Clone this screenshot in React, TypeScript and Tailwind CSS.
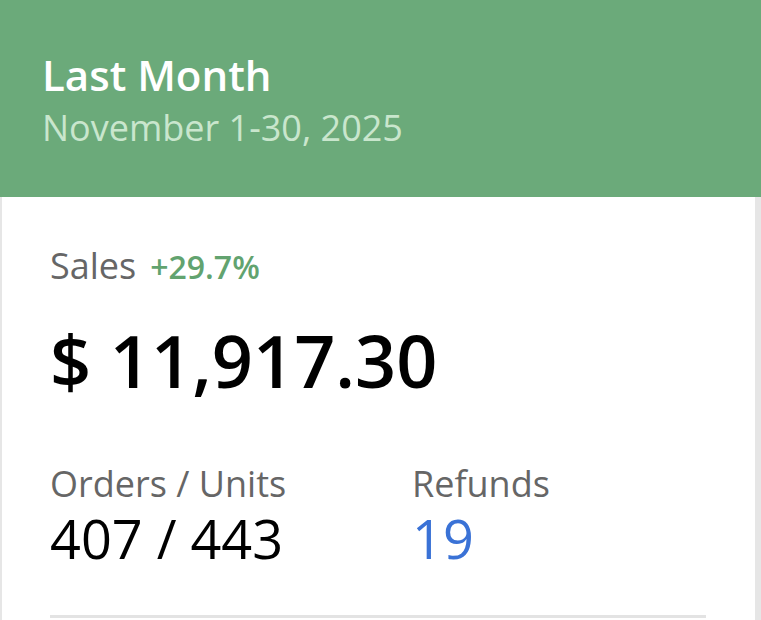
import React from 'react';

const App: React.FC = () => {
  return (
    <div className="w-[761px] h-[620px] overflow-hidden bg-[#e6e6e6] font-['Open_Sans',sans-serif]">
      <div className="h-[197px] bg-[#6baa7a] px-[42px] pt-[47px]">
        <h1 className="text-[42px] leading-[56px] font-semibold text-white">Last Month</h1>
        <p className="mt-[1px] text-[36px] leading-[48px] text-[#c9e6cd]">November 1-30, 2025</p>
      </div>

      <div className="ml-[2px] mr-[6px] h-[423px] bg-white px-[48px] pt-[45px]">
        <div className="flex items-baseline gap-[14px] leading-[48px]">
          <span className="text-[36px] text-[#666666]">Sales</span>
          <span className="text-[32px] font-semibold text-[#62a36f]">+29.7%</span>
        </div>
        <div className="mt-[24px] text-[72px] leading-[90px] font-semibold text-black">$ 11,917.30</div>

        <div className="mt-[55px] flex">
          <div className="w-[362px]">
            <div className="text-[36px] leading-[48px] text-[#666666]">Orders / Units</div>
            <div className="mt-[2px] text-[54px] leading-[56px] text-black">407 / 443</div>
          </div>
          <div>
            <div className="text-[36px] leading-[48px] text-[#666666]">Refunds</div>
            <div className="mt-[2px] text-[54px] leading-[56px] text-[#3a72d6]">19</div>
          </div>
        </div>

        <div className="mt-[49px] h-[3px] w-[656px] bg-[#e3e3e3]" />
      </div>
    </div>
  );
};

export default App;
